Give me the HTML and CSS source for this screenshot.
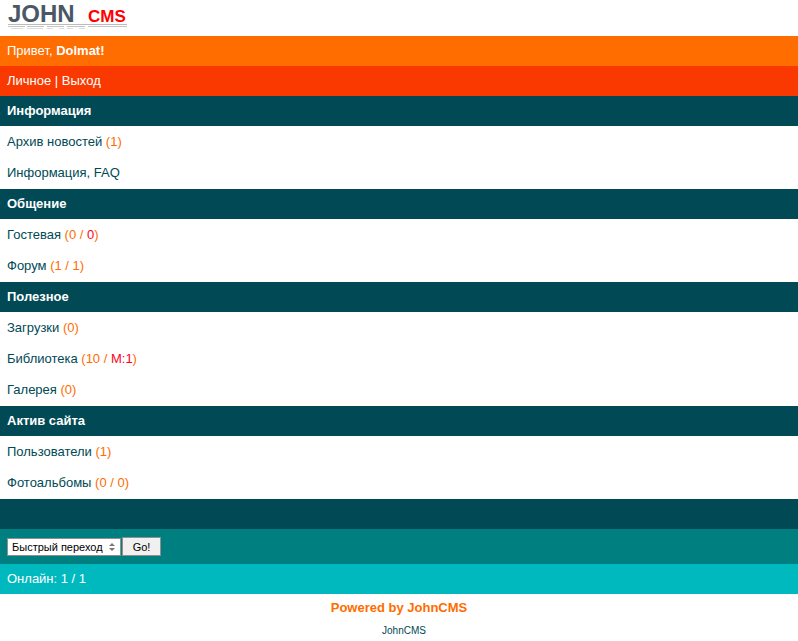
FILE: index.html
```
<!DOCTYPE html>
<html lang="ru">
<head>
  <meta charset="UTF-8">
  <meta name="viewport" content="width=device-width, initial-scale=1.0">
  <title>JohnCMS</title>
  <link rel="stylesheet" href="styles.css">
</head>
<body>
  <div class="logo">
    <svg width="122" height="24" viewBox="0 0 122 24" role="img" aria-label="JohnCMS">
      <text class="logo-john" x="1" y="16">JOHN</text>
      <text class="logo-cms" x="81" y="16">CMS</text>
      <path d="M1 18.5H120" stroke="#bbb"/>
      <path d="M1 20.5H18M20 20.5H37M40 20.5H57M60 20.5H78M81 20.5H120" stroke="#c4c4c4"/>
      <path d="M4 22.5H16M20 22.5H36M40 22.5H46M52 22.5H57M60 22.5H66M72 22.5H78" stroke="#ddd"/>
    </svg>
  </div>
  <div class="header">Привет, <b>Dolmat!</b></div>
  <div class="tmn"><a href="#">Личное</a> | <a href="#">Выход</a></div>

  <div class="maintxt">
    <div class="phdr">Информация</div>
    <div class="block">
      <div class="menu"><a href="#">Архив новостей</a> <span class="count">(1)</span></div>
      <div class="menu"><a href="#">Информация, FAQ</a></div>
    </div>
    <div class="phdr">Общение</div>
    <div class="block">
      <div class="menu"><a href="#">Гостевая</a> <span class="count">(0 / <a class="red" href="#">0</a>)</span></div>
      <div class="menu"><a href="#">Форум</a> <span class="count">(1 / 1)</span></div>
    </div>
    <div class="phdr">Полезное</div>
    <div class="block">
      <div class="menu"><a href="#">Загрузки</a> <span class="count">(0)</span></div>
      <div class="menu"><a href="#">Библиотека</a> <span class="count">(10 / <a class="red" href="#">М:1</a>)</span></div>
      <div class="menu"><a href="#">Галерея</a> <span class="count">(0)</span></div>
    </div>
    <div class="phdr">Актив сайта</div>
    <div class="block">
      <div class="menu"><a href="#">Пользователи</a> <span class="count">(1)</span></div>
      <div class="menu"><a href="#">Фотоальбомы</a> <span class="count">(0 / 0)</span></div>
    </div>
    <div class="phdr"></div>
  </div>

  <form class="fmenu" action="#" method="post">
    <span class="select-wrap">
      <select name="adres" aria-label="Быстрый переход">
        <option>Быстрый переход</option>
        <option>Форум</option>
        <option>Гостевая</option>
      </select>
      <svg class="arrows" width="6" height="8" viewBox="0 0 6 8">
        <path d="M0 3L3 0L6 3ZM0 5L3 8L6 5Z" fill="#777"/>
      </svg>
    </span>
    <button type="submit">Go!</button>
  </form>
  <div class="footer"><a href="#">Онлайн: 1 / 1</a></div>

  <div class="copy">
    <div class="powered">Powered by JohnCMS</div>
    <a class="home" href="#">JohnCMS</a>
  </div>
</body>
</html>
```
FILE: styles.css
```
body {
  margin: 0;
  background-color: #fff;
  color: #004955;
  font-family: Arial, "Liberation Sans", sans-serif;
  font-size: 13px;
  line-height: 16px;
}
a {
  color: #004955;
  text-decoration: none;
}
.logo {
  padding: 6px 7px;
}
.logo svg {
  display: block;
  overflow: visible;
}
.logo-john, .logo-cms {
  font-weight: bold;
}
.logo-john {
  font-size: 24px;
  fill: #4a5866;
}
.logo-cms {
  font-size: 17px;
  fill: #ff0000;
}
.header, .tmn, .phdr, .footer {
  min-height: 16px;
  padding: 7px;
  color: #fff;
}
.header {
  background-color: #ff6c00;
}
.tmn {
  background-color: #f93900;
}
.tmn a, .footer a {
  color: #fff;
}
.phdr {
  background-color: #004955;
  font-weight: bold;
}
.block {
  padding-bottom: 1px;
}
.menu {
  padding: 8px 7px 7px;
}
.count {
  color: #ff6c00;
}
.red {
  color: #ff0022;
}
.fmenu {
  display: flex;
  align-items: center;
  gap: 1px;
  padding: 8px 7px;
  background-color: #007f80;
}
.select-wrap {
  position: relative;
}
select, button {
  box-sizing: border-box;
  display: block;
  margin: 0;
  border: 1px solid #8f8f8f;
  border-radius: 0;
  color: #000;
  font-family: inherit;
  font-size: 11px;
}
select {
  appearance: none;
  width: 114px;
  height: 18px;
  padding: 0 4px;
  background-color: #fff;
}
/* up/down marks over the right edge of the select */
.arrows {
  position: absolute;
  top: 5px;
  right: 6px;
  pointer-events: none;
}
button {
  width: 39px;
  height: 19px;
  padding: 0;
  background-color: #f0f0f0;
}
.footer {
  background-color: #00b9bf;
}
.copy {
  padding: 6px 7px;
  text-align: center;
  font-size: 10px;
}
.powered {
  margin-bottom: 7px;
  color: #ff6c00;
  font-size: 13px;
  font-weight: bold;
}
.home {
  padding-left: 10px;
}
```
